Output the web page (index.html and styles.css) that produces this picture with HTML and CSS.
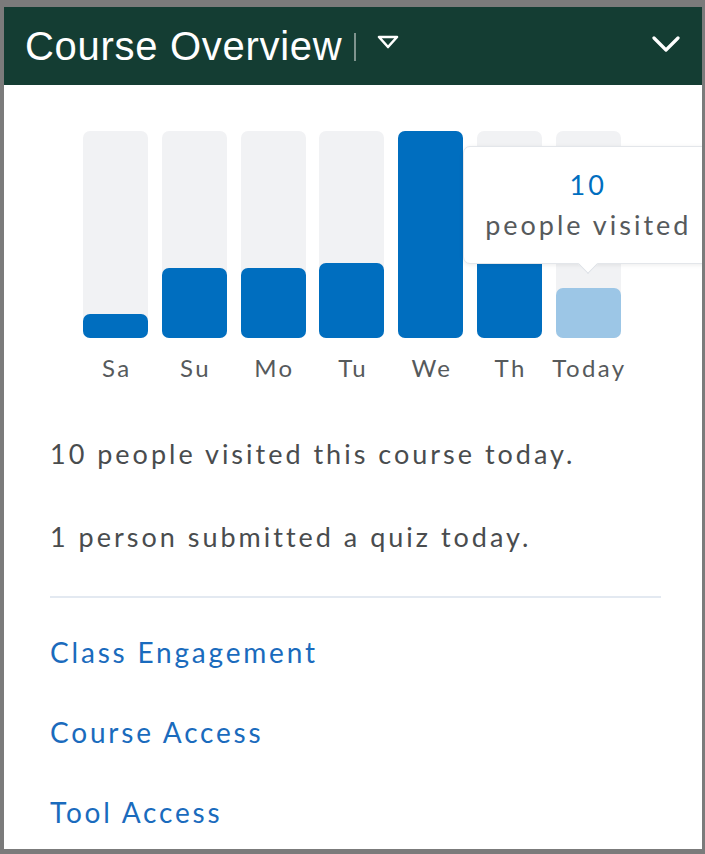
FILE: index.html
```html
<!DOCTYPE html>
<html lang="en">
<head>
    <meta charset="UTF-8">
    <meta name="viewport" content="width=device-width, initial-scale=1.0">
    <title>Course Overview</title>
    <link rel="stylesheet" href="styles.css">
</head>
<body>

    <div class="widget">
        <div class="widget-header">
            <h1>Course Overview</h1>
            <span class="separador"></span>
            <svg class="menu-icon" width="22" height="14" viewBox="0 0 22 14">
                <polygon points="2,2 20,2 11,12" fill="none" stroke="#fff" stroke-width="2.6" stroke-linejoin="round"/>
            </svg>
            <svg class="chevron" width="28" height="18" viewBox="0 0 28 18">
                <polyline points="2,3 14,15 26,3" fill="none" stroke="#fff" stroke-width="3.2" stroke-linecap="round" stroke-linejoin="round"/>
            </svg>
        </div>

        <div class="widget-body">
            <div class="grafico">
                <div class="coluna">
                    <div class="barra"><div class="valor" style="height: 24px"></div></div>
                    <span class="dia">Sa</span>
                </div>
                <div class="coluna">
                    <div class="barra"><div class="valor" style="height: 70px"></div></div>
                    <span class="dia">Su</span>
                </div>
                <div class="coluna">
                    <div class="barra"><div class="valor" style="height: 70px"></div></div>
                    <span class="dia">Mo</span>
                </div>
                <div class="coluna">
                    <div class="barra"><div class="valor" style="height: 75px"></div></div>
                    <span class="dia">Tu</span>
                </div>
                <div class="coluna">
                    <div class="barra"><div class="valor" style="height: 207px"></div></div>
                    <span class="dia">We</span>
                </div>
                <div class="coluna">
                    <div class="barra"><div class="valor" style="height: 150px"></div></div>
                    <span class="dia">Th</span>
                </div>
                <div class="coluna hoje">
                    <div class="barra">
                        <div class="valor" style="height: 50px"></div>
                        <div class="tooltip">
                            <strong>10</strong>
                            <span>people visited</span>
                        </div>
                    </div>
                    <span class="dia">Today</span>
                </div>
            </div>

            <p class="resumo">10 people visited this course today.</p>
            <p class="resumo">1 person submitted a quiz today.</p>

            <hr class="divisor">

            <ul class="links">
                <li><a href="#">Class Engagement</a></li>
                <li><a href="#">Course Access</a></li>
                <li><a href="#">Tool Access</a></li>
            </ul>
        </div>
    </div>

</body>
</html>
```

FILE: styles.css
```css
body {
    margin: 0;
    background-color: #7b7b7b;
    font-family: Lato, "Open Sans", sans-serif;
    height: 854px;
    overflow: hidden;
}

.widget {
    margin: 7px 3px 0 4px;
    height: 842px;
    background: white;
    overflow: hidden;
}

.widget-header {
    height: 78px;
    background-color: #143d33;
    display: flex;
    align-items: center;
    padding: 0 22px 0 21px;
}

.widget-header h1 {
    margin: 0;
    font-family: "Liberation Sans", Arial, sans-serif;
    font-weight: normal;
    font-size: 40px;
    letter-spacing: 0.7px;
    color: white;
}

.separador {
    width: 2px;
    height: 28px;
    background: #7f948e;
    margin: 2px 0 0 12px;
}

.menu-icon {
    margin: -8px 0 0 21px;
}

.chevron {
    margin: -4px 0 0 auto;
}

.widget-body {
    padding: 46px 41px 0 46px;
}

.grafico {
    display: grid;
    grid-template-columns: repeat(7, 65px);
    column-gap: 13.8px;
    padding-left: 33px;
}

.coluna {
    display: flex;
    flex-direction: column;
    align-items: center;
}

.barra {
    position: relative;
    width: 65px;
    height: 207px;
    background: #f1f2f4;
    border-radius: 7px;
    display: flex;
    align-items: flex-end;
}

.valor {
    width: 100%;
    background: #006ebf;
    border-radius: 7px;
}

.hoje .valor {
    background: #9cc6e6;
}

.dia {
    margin-top: 15px;
    font-size: 24px;
    letter-spacing: 2.4px;
    text-indent: 2.4px;
    color: #565a5c;
}

.tooltip {
    position: absolute;
    top: 15px;
    left: 50%;
    transform: translateX(-50%);
    width: 248px;
    height: 116px;
    background: white;
    border: 1px solid #e3e6ea;
    border-radius: 7px;
    box-shadow: 0 1px 4px rgba(0, 0, 0, 0.08);
    display: flex;
    flex-direction: column;
    align-items: center;
    justify-content: center;
    font-size: 27px;
    line-height: 40px;
    letter-spacing: 3px;
    color: #565a5c;
}

.tooltip strong {
    font-weight: normal;
    color: #006ebf;
}

.tooltip::after {
    content: "";
    position: absolute;
    bottom: -8px;
    left: 50%;
    width: 13px;
    height: 13px;
    margin-left: -7px;
    background: white;
    border-right: 1px solid #dde1e6;
    border-bottom: 1px solid #dde1e6;
    transform: rotate(45deg);
}

.resumo {
    margin: 0;
    font-size: 27px;
    line-height: 30px;
    letter-spacing: 3px;
    color: #494c4e;
}

.resumo:first-of-type {
    margin-top: 57px;
}

.resumo + .resumo {
    margin-top: 53px;
}

.divisor {
    margin: 44px 0 0 0;
    border: none;
    height: 2px;
    background: #e3e9f1;
}

.links {
    list-style: none;
    margin: 37px 0 0 0;
    padding: 0;
}

.links li {
    height: 80px;
}

.links a {
    font-size: 28px;
    letter-spacing: 2.8px;
    color: #1a6bbd;
    text-decoration: none;
}
```
